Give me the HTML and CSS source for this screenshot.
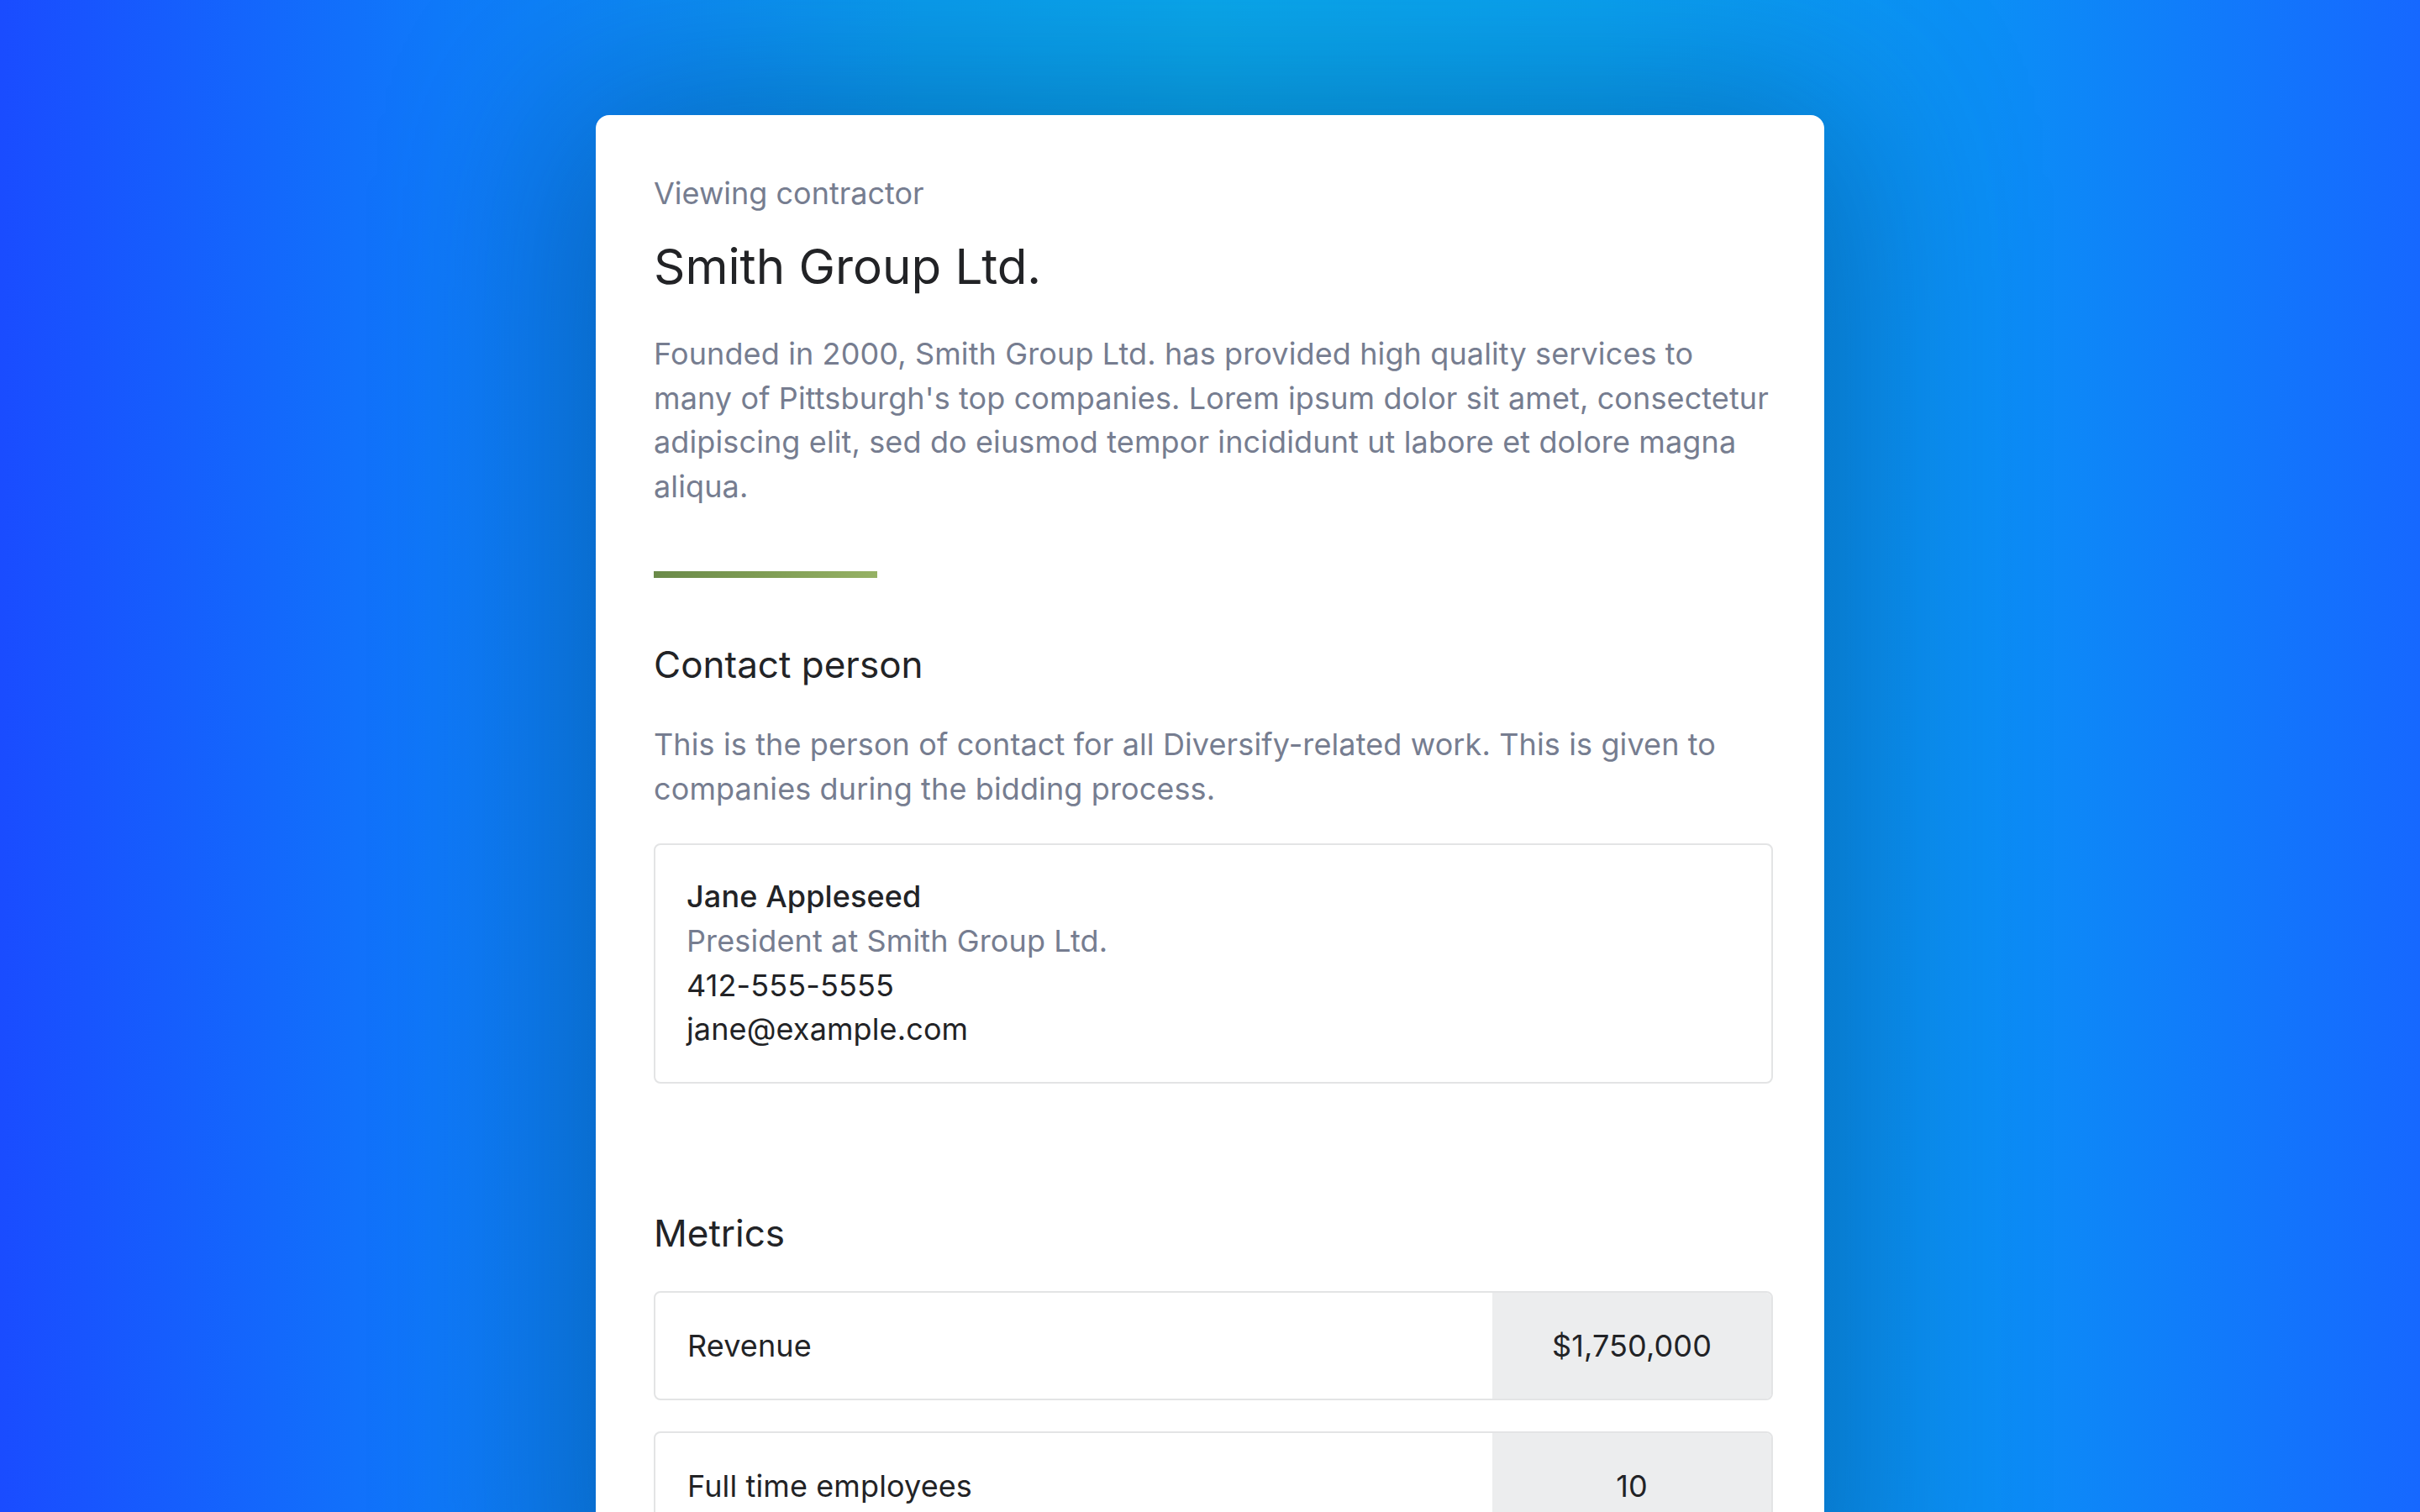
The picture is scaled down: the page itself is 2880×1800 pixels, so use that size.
FILE: index.html
```html
<!DOCTYPE html>
<html lang="en">
<head>
<meta charset="utf-8">
<title>Smith Group Ltd.</title>
<link rel="stylesheet" href="styles.css">
</head>
<body>
<main class="stage">
  <section class="card">
    <p class="eyebrow">Viewing contractor</p>
    <h1 class="title">Smith Group Ltd.</h1>
    <p class="lead">Founded in 2000, Smith Group Ltd. has provided high quality services to many of Pittsburgh's top companies. Lorem ipsum dolor sit amet, consectetur adipiscing elit, sed do eiusmod tempor incididunt ut labore et dolore magna aliqua.</p>
    <div class="accent"></div>

    <h2 class="section-title contact-title">Contact person</h2>
    <p class="lead section-lead">This is the person of contact for all Diversify-related work. This is given to companies during the bidding process.</p>
    <div class="contact-box">
      <div class="contact-name">Jane Appleseed</div>
      <div class="contact-role">President at Smith Group Ltd.</div>
      <div class="contact-line">412-555-5555</div>
      <div class="contact-line">jane@example.com</div>
    </div>

    <h2 class="section-title metrics-title">Metrics</h2>
    <div class="metrics">
      <div class="metric-row">
        <div class="metric-label">Revenue</div>
        <div class="metric-value">$1,750,000</div>
      </div>
      <div class="metric-row">
        <div class="metric-label">Full time employees</div>
        <div class="metric-value">10</div>
      </div>
    </div>
  </section>
</main>
</body>
</html>
```

FILE: styles.css
```css
html, body {
  margin: 0;
  padding: 0;
}

body {
  width: 2880px;
  height: 1800px;
  overflow: hidden;
  font-family: "Inter", "Noto Sans", "Liberation Sans", sans-serif;
  color: #222326;
  background: linear-gradient(90deg, #1a4cff 0%, #0f79fa 18%, #0a9ded 38%, #0aa9ec 50%, #0aa2f0 66%, #0b8ff6 82%, #1668ff 100%);
}

.stage {
  height: 1800px;
  display: flex;
  justify-content: center;
  align-items: flex-start;
  padding-top: 137px;
  box-sizing: border-box;
}

.card {
  width: 1462px;
  box-sizing: border-box;
  padding: 66px 61px 120px 69px;
  background: #ffffff;
  border-radius: 16px;
  box-shadow: 0 20px 220px 30px rgba(2, 50, 110, 0.45);
}

.eyebrow {
  margin: 0;
  font-size: 36px;
  line-height: 54px;
  color: #767d90;
}

.title {
  margin: 26px 0 0;
  font-size: 58.3px;
  line-height: 68px;
  font-weight: 400;
  color: #222326;
}

.lead {
  margin: 44px 0 0;
  font-size: 36px;
  line-height: 52.7px;
  letter-spacing: 0.12px;
  color: #767d90;
}

.accent {
  margin-top: 74px;
  width: 20%;
  height: 8px;
  background: linear-gradient(90deg, #6a8a49 0%, #7d9b53 45%, #96b265 100%);
}

.section-title {
  margin: 0;
  font-size: 44px;
  line-height: 60px;
  font-weight: 400;
  color: #222326;
}

.contact-title {
  margin-top: 73px;
}

.section-lead {
  margin-top: 39px;
}

.contact-box {
  margin-top: 39px;
  border: 2px solid #e3e4e5;
  border-radius: 8px;
  padding: 35px 37px 36px;
  font-size: 36px;
  line-height: 52.7px;
  letter-spacing: 0.12px;
}

.contact-name {
  font-weight: 500;
  color: #222326;
}

.contact-role {
  color: #767d90;
}

.contact-line {
  color: #222326;
}

.metrics-title {
  margin-top: 148px;
}

.metrics {
  margin-top: 39px;
  display: flex;
  flex-direction: column;
  gap: 37px;
}

.metric-row {
  height: 130px;
  box-sizing: border-box;
  display: flex;
  border: 2px solid #e3e4e5;
  border-radius: 8px;
  overflow: hidden;
  font-size: 36px;
  line-height: 52.7px;
  letter-spacing: 0.12px;
}

.metric-label {
  flex: 1;
  display: flex;
  align-items: center;
  padding-left: 38px;
  color: #222326;
}

.metric-value {
  width: 332px;
  display: flex;
  align-items: center;
  justify-content: center;
  background: #ecedee;
  color: #222326;
}
```
